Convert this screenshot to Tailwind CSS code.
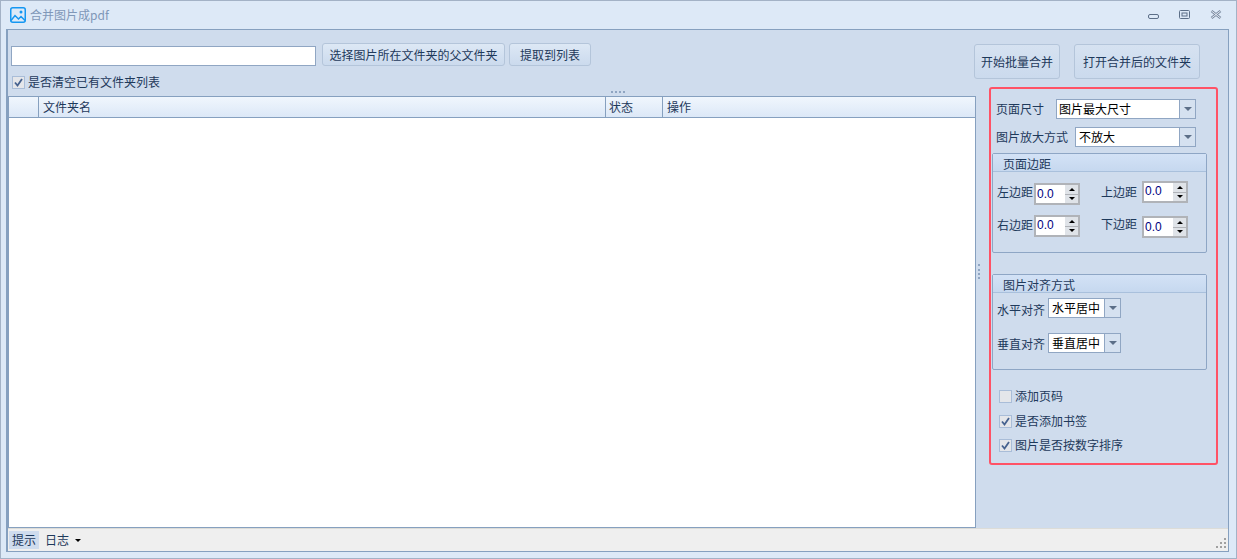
<!DOCTYPE html>
<html lang="zh">
<head>
  <meta charset="UTF-8" />
  <title>合并图片成pdf</title>
  <script src="https://cdn.jsdelivr.net/npm/@tailwindcss/browser@4"></script>
</head>
<body class="overflow-hidden">
  <div class="w-[1237px] h-[559px] flex flex-col border border-[#a3b2c6] bg-[#dde9f7] text-[12px] leading-[16px] text-[#1e395b] font-['Noto_Sans_CJK_SC','Noto_Sans',sans-serif]">
    <!-- Title bar -->
    <div class="h-[28px] shrink-0 flex items-center pl-[9px] pr-[14px]">
      <svg width="16" height="16" viewBox="0 0 16 16" fill="none" stroke="#1497f2" stroke-width="1.5">
        <rect x="0.75" y="0.75" width="14.5" height="14.5" rx="2" />
        <path d="M1 13.5l4-5 3.5 3.5 2.5-2.5 4 4" />
        <circle cx="11" cy="5" r="1.5" fill="#1497f2" stroke="none" />
      </svg>
      <span class="ml-[4px] text-[#7f97b8] text-[12px]">合并图片成pdf</span>
      <div class="ml-auto flex items-center gap-[20px] mt-[-1px]">
        <svg width="11" height="6" class="mt-[5px]" fill="none" stroke="#5c6f88"><rect x="0.5" y="0.5" width="10" height="4" rx="1.5" /></svg>
        <svg width="11" height="9" fill="none" stroke="#5c6f88"><rect x="0.5" y="0.5" width="10" height="8" rx="1" /><rect x="3" y="3" width="5" height="3" stroke-width="1" /></svg>
        <svg width="12" height="9" fill="none"><path d="M1.5 1l9 7M10.5 1l-9 7" stroke="#7a8aa0" stroke-width="2.6" /><path d="M1.5 1l9 7M10.5 1l-9 7" stroke="#eef3fa" stroke-width="0.9" /></svg>
      </div>
    </div>

    <!-- Client area -->
    <div class="ml-[5px] mr-[7px] h-[523px] shrink-0 flex flex-col border border-l-2 border-[#86a0bf] bg-[#cfdced]">
      <div class="flex-1 min-h-0 flex">
        <!-- Left column -->
        <div class="w-[968px] shrink-0 flex flex-col relative">
          <div class="flex items-end pl-[3px] pt-[13px]">
            <input class="w-[305px] h-[20px] bg-white border border-[#90a6c3]" />
            <button class="ml-[6px] h-[23px] w-[183px] rounded-[3px] border border-[#b4c5da] bg-gradient-to-b from-[#dde8f5] to-[#cbdaed]">选择图片所在文件夹的父文件夹</button>
            <button class="ml-[4px] h-[23px] w-[82px] rounded-[3px] border border-[#b4c5da] bg-gradient-to-b from-[#dde8f5] to-[#cbdaed]">提取到列表</button>
          </div>
          <label class="flex items-center h-[16px] pl-[4px] mt-[8px] gap-[3px]">
            <span class="w-[13px] h-[13px] border border-[#a9bdd8] bg-[#e4e6ea] flex items-center justify-center">
              <svg width="9" height="9" fill="none" stroke="#46628f" stroke-width="1.8"><path d="M1 4.5l2.5 3L8 1" /></svg>
            </span>
            是否清空已有文件夹列表
          </label>
          <div class="absolute left-[603px] top-[61px] w-[14px] h-[2px] border-t-2 border-dotted border-[#8fa5c2]"></div>
          <!-- Grid -->
          <div class="mt-[6px] flex-1 min-h-0 flex flex-col border border-[#86a0bf] bg-white">
            <div class="h-[21px] shrink-0 flex border-b border-[#86a0bf] bg-gradient-to-b from-[#f0f6fd] to-[#dce8f7]">
              <div class="w-[30px] border-r border-[#86a0bf]"></div>
              <div class="w-[567px] border-r border-[#86a0bf] pl-[4px] leading-[20px]">文件夹名</div>
              <div class="w-[57px] border-r border-[#86a0bf] pl-[3px] leading-[20px]">状态</div>
              <div class="flex-1 pl-[4px] leading-[20px]">操作</div>
            </div>
          </div>
        </div>

        <!-- Splitter -->
        <div class="w-[5px] shrink-0 flex items-center justify-center pb-[16px]">
          <div class="w-[2px] h-[15px] border-l-2 border-dotted border-[#8fa5c2]"></div>
        </div>

        <!-- Right column -->
        <div class="flex-1 flex flex-col">
          <div class="flex pt-[14px] gap-[14px] h-[57px]">
            <button class="h-[35px] w-[86px] -ml-[7px] rounded-[3px] border border-[#b4c5da] bg-gradient-to-b from-[#d6e2f1] to-[#cbdaed]">开始批量合并</button>
            <button class="h-[35px] w-[126px] rounded-[3px] border border-[#b4c5da] bg-gradient-to-b from-[#d6e2f1] to-[#cbdaed]">打开合并后的文件夹</button>
          </div>
          <!-- Options panel -->
          <div class="ml-[8px] w-[229px] h-[378px] border-2 border-[#ff5266] rounded-[3px] flex flex-col">
            <div class="flex items-center h-[20px] mt-[10px] pl-[5px]">
              <span class="w-[60px]">页面尺寸</span>
              <div class="w-[140px] h-[20px] flex border border-[#90a6c3] bg-white text-black">
                <span class="flex-1 pl-[2px] leading-[18px]">图片最大尺寸</span>
                <span class="w-[16px] border-l border-[#90a6c3] bg-[#d5e1f0] flex items-center justify-center"><span class="border-x-[4px] border-x-transparent border-t-[4px] border-t-[#5c6f88]"></span></span>
              </div>
            </div>
            <div class="flex items-center h-[20px] mt-[8px] pl-[5px]">
              <span class="w-[79px]">图片放大方式</span>
              <div class="w-[121px] h-[20px] flex border border-[#90a6c3] bg-white text-black">
                <span class="flex-1 pl-[3px] leading-[18px]">不放大</span>
                <span class="w-[16px] border-l border-[#90a6c3] bg-[#d5e1f0] flex items-center justify-center"><span class="border-x-[4px] border-x-transparent border-t-[4px] border-t-[#5c6f88]"></span></span>
              </div>
            </div>

            <!-- Margins group -->
            <div class="ml-[1px] mt-[6px] w-[215px] h-[100px] shrink-0 border border-[#8ea6c5] rounded-[2px]">
              <div class="h-[18px] pl-[10px] leading-[19px] border-b border-[#a9c0dc] bg-gradient-to-b from-[#d3e2f6] to-[#c6d8ef]">页面边距</div>
              <div class="flex pl-[4px] pt-[11px]">
                <div class="flex flex-col gap-[10px]">
                  <div class="flex items-center gap-[1px]">
                    <span class="mb-[4px]">左边距</span>
                    <div class="w-[46px] h-[22px] flex border-2 border-[#b0b3b8] bg-white text-[#000080] font-['Liberation_Sans',sans-serif]">
                      <span class="flex-1 pl-[1px] leading-[18px]">0.0</span>
                      <span class="w-[15px] flex flex-col border-l-2 border-white bg-[#b0b3b8] gap-[1px]">
                        <span class="flex-1 bg-[#dfe3e8] flex items-center justify-center"><span class="border-x-[3px] border-x-transparent border-b-[3px] border-b-black"></span></span>
                        <span class="flex-1 bg-[#dfe3e8] flex items-center justify-center"><span class="border-x-[3px] border-x-transparent border-t-[3px] border-t-black"></span></span>
                      </span>
                    </div>
                  </div>
                  <div class="flex items-center gap-[1px]">
                    <span class="mb-[2px]">右边距</span>
                    <div class="w-[46px] h-[22px] flex border-2 border-[#b0b3b8] bg-white text-[#000080] font-['Liberation_Sans',sans-serif]">
                      <span class="flex-1 pl-[1px] leading-[16px]">0.0</span>
                      <span class="w-[15px] flex flex-col border-l-2 border-white bg-[#b0b3b8] gap-[1px]">
                        <span class="flex-1 bg-[#dfe3e8] flex items-center justify-center"><span class="border-x-[3px] border-x-transparent border-b-[3px] border-b-black"></span></span>
                        <span class="flex-1 bg-[#dfe3e8] flex items-center justify-center"><span class="border-x-[3px] border-x-transparent border-t-[3px] border-t-black"></span></span>
                      </span>
                    </div>
                  </div>
                </div>
                <div class="ml-[21px] -mt-[2px] flex flex-col gap-[13px]">
                  <div class="flex items-center gap-[5px]">
                    <span>上边距</span>
                    <div class="w-[46px] h-[22px] flex border-2 border-[#b0b3b8] bg-white text-[#000080] font-['Liberation_Sans',sans-serif]">
                      <span class="flex-1 pl-[1px] leading-[16px]">0.0</span>
                      <span class="w-[15px] flex flex-col border-l-2 border-white bg-[#b0b3b8] gap-[1px]">
                        <span class="flex-1 bg-[#dfe3e8] flex items-center justify-center"><span class="border-x-[3px] border-x-transparent border-b-[3px] border-b-black"></span></span>
                        <span class="flex-1 bg-[#dfe3e8] flex items-center justify-center"><span class="border-x-[3px] border-x-transparent border-t-[3px] border-t-black"></span></span>
                      </span>
                    </div>
                  </div>
                  <div class="flex items-center gap-[5px]">
                    <span class="mb-[6px]">下边距</span>
                    <div class="w-[46px] h-[22px] flex border-2 border-[#b0b3b8] bg-white text-[#000080] font-['Liberation_Sans',sans-serif]">
                      <span class="flex-1 pl-[1px] leading-[18px]">0.0</span>
                      <span class="w-[15px] flex flex-col border-l-2 border-white bg-[#b0b3b8] gap-[1px]">
                        <span class="flex-1 bg-[#dfe3e8] flex items-center justify-center"><span class="border-x-[3px] border-x-transparent border-b-[3px] border-b-black"></span></span>
                        <span class="flex-1 bg-[#dfe3e8] flex items-center justify-center"><span class="border-x-[3px] border-x-transparent border-t-[3px] border-t-black"></span></span>
                      </span>
                    </div>
                  </div>
                </div>
              </div>
            </div>

            <!-- Align group -->
            <div class="ml-[1px] mt-[21px] w-[215px] h-[96px] shrink-0 border border-[#8ea6c5] rounded-[2px]">
              <div class="h-[18px] pl-[10px] leading-[19px] border-b border-[#a9c0dc] bg-gradient-to-b from-[#d3e2f6] to-[#c6d8ef]">图片对齐方式</div>
              <div class="flex items-center pl-[4px] pt-[5px]">
                <span class="w-[51px] mt-[4px]">水平对齐</span>
                <div class="w-[73px] h-[20px] flex border border-[#90a6c3] bg-white text-black">
                  <span class="flex-1 pl-[3px] leading-[18px]">水平居中</span>
                  <span class="w-[16px] border-l border-[#90a6c3] bg-[#d5e1f0] flex items-center justify-center"><span class="border-x-[4px] border-x-transparent border-t-[4px] border-t-[#5c6f88]"></span></span>
                </div>
              </div>
              <div class="flex items-center pl-[4px] pt-[15px]">
                <span class="w-[51px] mt-[2px]">垂直对齐</span>
                <div class="w-[73px] h-[20px] flex border border-[#90a6c3] bg-white text-black">
                  <span class="flex-1 pl-[3px] leading-[18px]">垂直居中</span>
                  <span class="w-[16px] border-l border-[#90a6c3] bg-[#d5e1f0] flex items-center justify-center"><span class="border-x-[4px] border-x-transparent border-t-[4px] border-t-[#5c6f88]"></span></span>
                </div>
              </div>
            </div>

            <!-- Checkboxes -->
            <label class="flex items-center h-[16px] mt-[18px] pl-[8px] gap-[3px]">
              <span class="w-[13px] h-[13px] border border-[#a9bdd8] bg-[#e4e6ea]"></span>
              添加页码
            </label>
            <label class="flex items-center h-[16px] mt-[9px] pl-[8px] gap-[3px]">
              <span class="w-[13px] h-[13px] border border-[#a9bdd8] bg-[#e4e6ea] flex items-center justify-center">
                <svg width="9" height="9" fill="none" stroke="#46628f" stroke-width="1.8"><path d="M1 4.5l2.5 3L8 1" /></svg>
              </span>
              是否添加书签
            </label>
            <label class="flex items-center h-[16px] mt-[8px] pl-[8px] gap-[3px]">
              <span class="w-[13px] h-[13px] border border-[#a9bdd8] bg-[#e4e6ea] flex items-center justify-center">
                <svg width="9" height="9" fill="none" stroke="#46628f" stroke-width="1.8"><path d="M1 4.5l2.5 3L8 1" /></svg>
              </span>
              图片是否按数字排序
            </label>
          </div>
        </div>
      </div>

      <!-- Status bar -->
      <div class="h-[23px] shrink-0 flex items-center bg-[#efefef] border-t border-[#dcdcd8] relative">
        <span class="ml-[1px] px-[3px] h-[18px] leading-[18px] bg-[#cfdcee]">提示</span>
        <span class="ml-[6px]">日志</span>
        <span class="ml-[6px] border-x-[3px] border-x-transparent border-t-[3px] border-t-black"></span>
        <svg width="11" height="11" class="absolute right-[1px] bottom-[2px]" fill="#a0a0a0">
          <rect x="8" y="0" width="2" height="2" /><rect x="4" y="4" width="2" height="2" /><rect x="8" y="4" width="2" height="2" /><rect x="0" y="8" width="2" height="2" /><rect x="4" y="8" width="2" height="2" /><rect x="8" y="8" width="2" height="2" />
        </svg>
      </div>
    </div>
  </div>
</body>
</html>
